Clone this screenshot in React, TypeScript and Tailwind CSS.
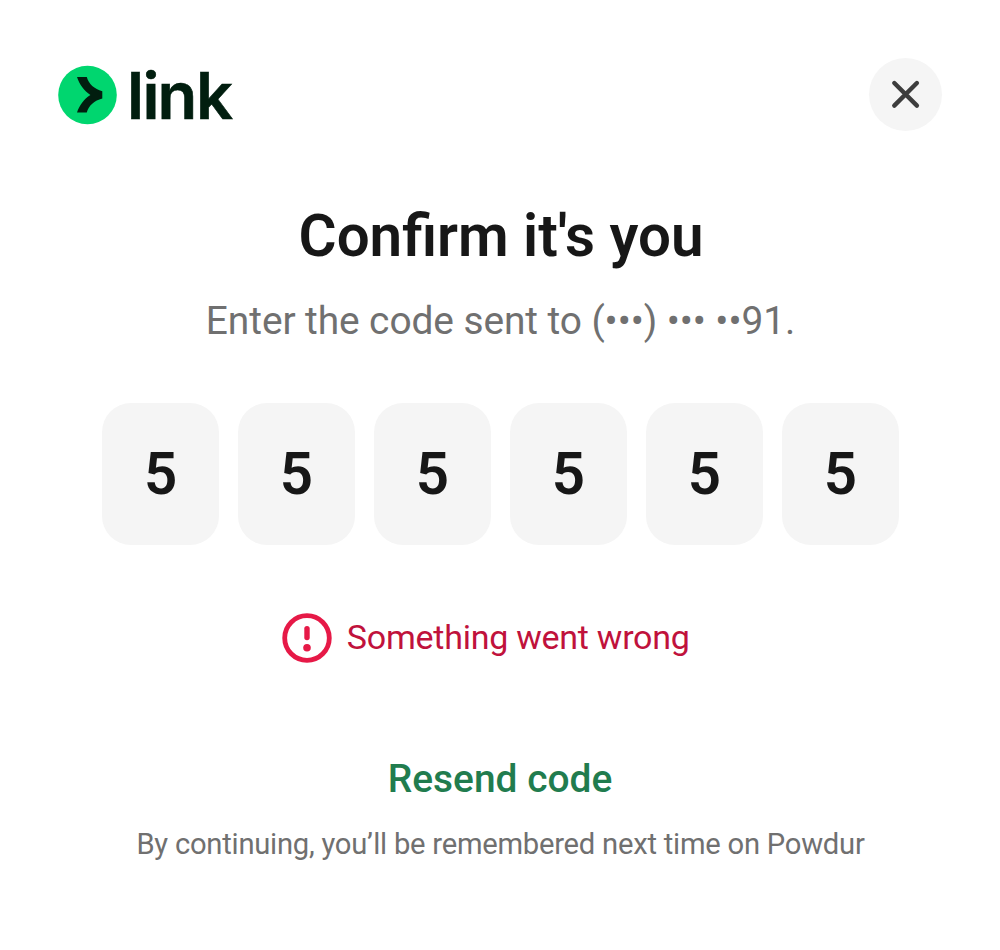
const digits = ['5', '5', '5', '5', '5', '5'];

function Logo() {
  return (
    <svg className="h-[94px] w-[210px]" viewBox="58 48 210 94" aria-label="link">
      <circle cx="87.5" cy="95" r="29.3" fill="#00D66F" />
      <path
        d="M77 77H86.8C88.6 83.8 94.4 89.2 102.3 91.2V98.6C94.4 100.6 88.6 105.8 86.8 112.4H77C79.5 105 84.2 98.7 90.4 94.9C84.2 91.1 79.5 84.6 77 77Z"
        fill="#011E0F"
      />
      <text
        x="127 142.4 157.6 196"
        y="119.3"
        fontSize="65"
        className="fill-[#011E0F] stroke-[#011E0F] stroke-[0.6px] font-['Inter',sans-serif] font-semibold"
      >
        link
      </text>
    </svg>
  );
}

function CloseButton() {
  return (
    <button
      type="button"
      aria-label="Close"
      className="mb-[2px] flex size-[73px] items-center justify-center rounded-full bg-[#f5f5f5]"
    >
      <svg className="size-[32px]" viewBox="0 0 32 32" fill="none">
        <path d="M4.3 5L26.9 27.6M26.9 5L4.3 27.6" stroke="#3d3d3d" strokeWidth="4.4" strokeLinecap="round" />
      </svg>
    </button>
  );
}

export default function App() {
  return (
    <main className="flex h-[950px] w-[1000px] flex-col items-center bg-white pl-px font-['Roboto',sans-serif] text-[#171717]">
      <header className="flex w-full items-center justify-between pt-[48px] pr-[58px] pl-[57px]">
        <Logo />
        <CloseButton />
      </header>
      <h1 className="mt-[59px] pl-px text-[58.3px] leading-[70px] font-semibold whitespace-nowrap">Confirm it's you</h1>
      <p className="mt-[22px] text-[38.9px] leading-[56px] tracking-[-0.09px] whitespace-nowrap text-[#707070]">
        Enter the code sent to (•••) ••• ••91.
      </p>
      <div className="mt-[54px] flex gap-[19.4px]">
        {digits.map((digit, i) => (
          <div
            key={i}
            className="flex h-[142px] w-[116.6px] items-center justify-center rounded-[29px] bg-[#f5f5f5] text-[58.3px] leading-none font-semibold"
          >
            {digit}
          </div>
        ))}
      </div>
      <div role="alert" className="mt-[68px] mr-[29px] flex items-center gap-[14.5px]">
        <svg className="size-[50px]" viewBox="0 0 50 50" fill="none">
          <circle cx="25" cy="25" r="22.3" stroke="#E61947" strokeWidth="4.8" />
          <path d="M25 15.6V24.5" stroke="#E61947" strokeWidth="5.4" strokeLinecap="round" />
          <circle cx="25" cy="34.8" r="3.8" fill="#E61947" />
        </svg>
        <span className="pb-[2px] text-[34px] leading-[48px] tracking-[-0.25px] whitespace-nowrap text-[#C0123C]">
          Something went wrong
        </span>
      </div>
      <button type="button" className="mt-[88px] pr-px text-[38.9px] leading-[56px] font-medium text-[#217C4E]">
        Resend code
      </button>
      <p className="mt-[17px] text-[29.2px] leading-[40px] tracking-[-0.24px] whitespace-nowrap text-[#707070]">
        By continuing, you’ll be remembered next time on Powdur
      </p>
    </main>
  );
}
